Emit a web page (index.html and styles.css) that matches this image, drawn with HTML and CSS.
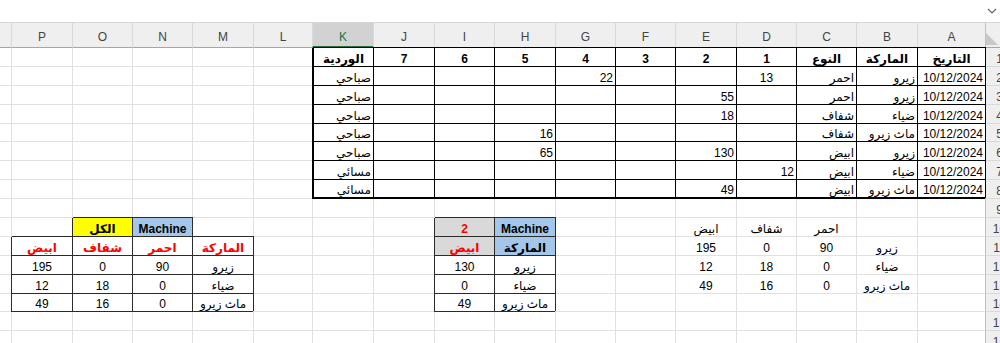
FILE: index.html
```html
<!DOCTYPE html>
<html lang="ar">
<head>
<meta charset="utf-8">
<title>Sheet</title>
<link rel="stylesheet" href="styles.css">
</head>
<body>
<div class="sheet">
  <div class="topbar">
    <svg class="chev" viewBox="0 0 10 6" width="10" height="6"><path d="M1 1 L5 5 L9 1" fill="none" stroke="#666" stroke-width="1.2"/></svg>
  </div>
  <div class="grid">
    <!-- column headers -->
    <span class="h corner"><svg viewBox="0 0 12 12" width="12" height="12"><polygon points="0,0 0,12 12,12" fill="#c8c8c8"/></svg></span>
    <span class="h">A</span><span class="h">B</span><span class="h">C</span><span class="h">D</span><span class="h">E</span><span class="h">F</span><span class="h">G</span><span class="h">H</span><span class="h">I</span><span class="h">J</span><span class="h sel">K</span><span class="h">L</span><span class="h">M</span><span class="h">N</span><span class="h">O</span><span class="h">P</span><span class="h"></span>

    <!-- row 1 -->
    <span class="rh">1</span>
    <span class="t c b">التاريخ</span><span class="t c b">الماركة</span><span class="t c b">النوع</span><span class="t c b">1</span><span class="t c b">2</span><span class="t c b">3</span><span class="t c b">4</span><span class="t c b">5</span><span class="t c b">6</span><span class="t c b">7</span><span class="t c b kl">الوردية</span>
    <span></span><span></span><span></span><span></span><span></span><span></span>

    <!-- row 2 -->
    <span class="rh">2</span>
    <span class="t">10/12/2024</span><span class="t">زيرو</span><span class="t">احمر</span><span class="t c">13</span><span class="t"></span><span class="t"></span><span class="t">22</span><span class="t"></span><span class="t"></span><span class="t"></span><span class="t kl">صباحي</span>
    <span></span><span></span><span></span><span></span><span></span><span></span>

    <!-- row 3 -->
    <span class="rh">3</span>
    <span class="t">10/12/2024</span><span class="t">زيرو</span><span class="t">احمر</span><span class="t"></span><span class="t">55</span><span class="t"></span><span class="t"></span><span class="t"></span><span class="t"></span><span class="t"></span><span class="t kl">صباحي</span>
    <span></span><span></span><span></span><span></span><span></span><span></span>

    <!-- row 4 -->
    <span class="rh">4</span>
    <span class="t">10/12/2024</span><span class="t">ضياء</span><span class="t">شفاف</span><span class="t"></span><span class="t">18</span><span class="t"></span><span class="t"></span><span class="t"></span><span class="t"></span><span class="t"></span><span class="t kl">صباحي</span>
    <span></span><span></span><span></span><span></span><span></span><span></span>

    <!-- row 5 -->
    <span class="rh">5</span>
    <span class="t">10/12/2024</span><span class="t">ماث زيرو</span><span class="t">شفاف</span><span class="t"></span><span class="t"></span><span class="t"></span><span class="t"></span><span class="t">16</span><span class="t"></span><span class="t"></span><span class="t kl">صباحي</span>
    <span></span><span></span><span></span><span></span><span></span><span></span>

    <!-- row 6 -->
    <span class="rh">6</span>
    <span class="t">10/12/2024</span><span class="t">زيرو</span><span class="t">ابيض</span><span class="t"></span><span class="t">130</span><span class="t"></span><span class="t"></span><span class="t">65</span><span class="t"></span><span class="t"></span><span class="t kl">صباحي</span>
    <span></span><span></span><span></span><span></span><span></span><span></span>

    <!-- row 7 -->
    <span class="rh">7</span>
    <span class="t">10/12/2024</span><span class="t">ضياء</span><span class="t">ابيض</span><span class="t">12</span><span class="t"></span><span class="t"></span><span class="t"></span><span class="t"></span><span class="t"></span><span class="t"></span><span class="t kl">مسائي</span>
    <span></span><span></span><span></span><span></span><span></span><span></span>

    <!-- row 8 -->
    <span class="rh">8</span>
    <span class="t bb">10/12/2024</span><span class="t bb">ماث زيرو</span><span class="t bb">ابيض</span><span class="t bb"></span><span class="t bb">49</span><span class="t bb"></span><span class="t bb"></span><span class="t bb"></span><span class="t bb"></span><span class="t bb"></span><span class="t bb kl">مسائي</span>
    <span></span><span></span><span></span><span></span><span></span><span></span>

    <!-- row 9 -->
    <span class="rh">9</span>
    <span></span><span></span><span></span><span></span><span></span><span></span><span></span><span></span><span></span><span></span><span></span><span></span><span></span><span></span><span></span><span></span><span></span>

    <!-- row 10 -->
    <span class="rh">10</span>
    <span></span><span></span><span class="c">احمر</span><span class="c">شفاف</span><span class="c">ابيض</span><span></span><span></span>
    <span class="u c b blue">Machine</span><span class="u c b red gray">2</span>
    <span></span><span></span><span></span><span></span>
    <span class="u c b blue">Machine</span><span class="u c b yel">الكل</span>
    <span></span><span></span>

    <!-- row 11 -->
    <span class="rh">11</span>
    <span></span><span class="c">زيرو</span><span class="c">90</span><span class="c">0</span><span class="c">195</span><span></span><span></span>
    <span class="u c b blue">الماركة</span><span class="u c b red gray">ابيض</span>
    <span></span><span></span><span></span>
    <span class="u c b red">الماركة</span><span class="u c b red">احمر</span><span class="u c b red">شفاف</span><span class="u c b red">ابيض</span>
    <span></span>

    <!-- row 12 -->
    <span class="rh">12</span>
    <span></span><span class="c">ضياء</span><span class="c">0</span><span class="c">18</span><span class="c">12</span><span></span><span></span>
    <span class="u c">زيرو</span><span class="u c">130</span>
    <span></span><span></span><span></span>
    <span class="u c">زيرو</span><span class="u c">90</span><span class="u c">0</span><span class="u c">195</span>
    <span></span>

    <!-- row 13 -->
    <span class="rh">13</span>
    <span></span><span class="c">ماث زيرو</span><span class="c">0</span><span class="c">16</span><span class="c">49</span><span></span><span></span>
    <span class="u c">ضياء</span><span class="u c">0</span>
    <span></span><span></span><span></span>
    <span class="u c">ضياء</span><span class="u c">0</span><span class="u c">18</span><span class="u c">12</span>
    <span></span>

    <!-- row 14 -->
    <span class="rh">14</span>
    <span></span><span></span><span></span><span></span><span></span><span></span><span></span>
    <span class="u c">ماث زيرو</span><span class="u c">49</span>
    <span></span><span></span><span></span>
    <span class="u c">ماث زيرو</span><span class="u c">0</span><span class="u c">16</span><span class="u c">49</span>
    <span></span>

    <!-- row 15 -->
    <span class="rh">15</span>
    <span></span><span></span><span></span><span></span><span></span><span></span><span></span><span></span><span></span><span></span><span></span><span></span><span></span><span></span><span></span><span></span><span></span>

    <!-- row 16 -->
    <span class="rh">16</span>
    <span></span><span></span><span></span><span></span><span></span><span></span><span></span><span></span><span></span><span></span><span></span><span></span><span></span><span></span><span></span><span></span><span></span>
  </div>
</div>
</body>
</html>
```

FILE: styles.css
```css
* { box-sizing: border-box; }

html, body {
  margin: 0;
  background: #ffffff;
}

body {
  font-family: "Liberation Sans", "DejaVu Sans", sans-serif;
  font-size: 12px;
  color: #000;
}

.sheet {
  width: 1000px;
  height: 343px;
  overflow: hidden;
  direction: rtl;
}

.topbar {
  height: 22px;
  display: flex;
  align-items: center;
  justify-content: flex-start;
  padding-right: 3px;
}

.chev { display: block; }

.grid {
  display: grid;
  width: 1062px;
  margin-right: -13px;
  grid-template-columns: 28px 68px 61px 60px 60px 61px 60px 60px 61px 60px 61px 61px 59px 61px 60px 60px 61px 60px;
  grid-template-rows: 26px 19px 19px 19px 19px 18px 19px 19px 19px 19px 19px 19px 19px 19px 18px 19px 19px;
}

.grid > span {
  display: flex;
  align-items: flex-end;
  justify-content: flex-start;
  padding: 0 2px;
  border-left: 1px solid #e1e1e1;
  border-bottom: 1px solid #e1e1e1;
  white-space: nowrap;
  overflow: hidden;
  line-height: 14px;
}

/* column headers */
.grid > .h {
  background: #efefef;
  border-top: 1px solid #d6d6d6;
  border-bottom: 1px solid #a6a6a6;
  border-left: 1px solid #d9d9d9;
  justify-content: center;
  color: #444;
  padding-bottom: 3px;
}

.grid > .h.sel {
  background: #d2d2d2;
  color: #217346;
  border-bottom: 2px solid #217346;
  padding-bottom: 2px;
}

.grid > .corner {
  justify-content: flex-end;
  padding: 0 3px 2px 0;
  border-left: 1px solid #bfbfbf;
}

/* row headers */
.grid > .rh {
  background: #efefef;
  border-left: 1px solid #bfbfbf;
  border-bottom: 1px solid #d9d9d9;
  justify-content: center;
  color: #444;
}

/* main data table: black borders */
.grid > .t {
  border-left-color: #000;
  border-bottom-color: #000;
  box-shadow: 1px -1px 0 #000;
}

.grid > .kl { border-left-width: 2px; }
.grid > .bb { border-bottom-width: 2px; }

/* summary tables */
.grid > .u {
  border-left-color: #2b2b2b;
  border-bottom-color: #2b2b2b;
  box-shadow: 1px -1px 0 #2b2b2b;
}

.grid > .c { justify-content: center; }
.b { font-weight: bold; }
.red { color: #ff0000; }
.grid > .blue { background: #a4c6e8; }
.grid > .gray { background: #d9d9d9; }
.grid > .yel { background: #ffff00; }
```
